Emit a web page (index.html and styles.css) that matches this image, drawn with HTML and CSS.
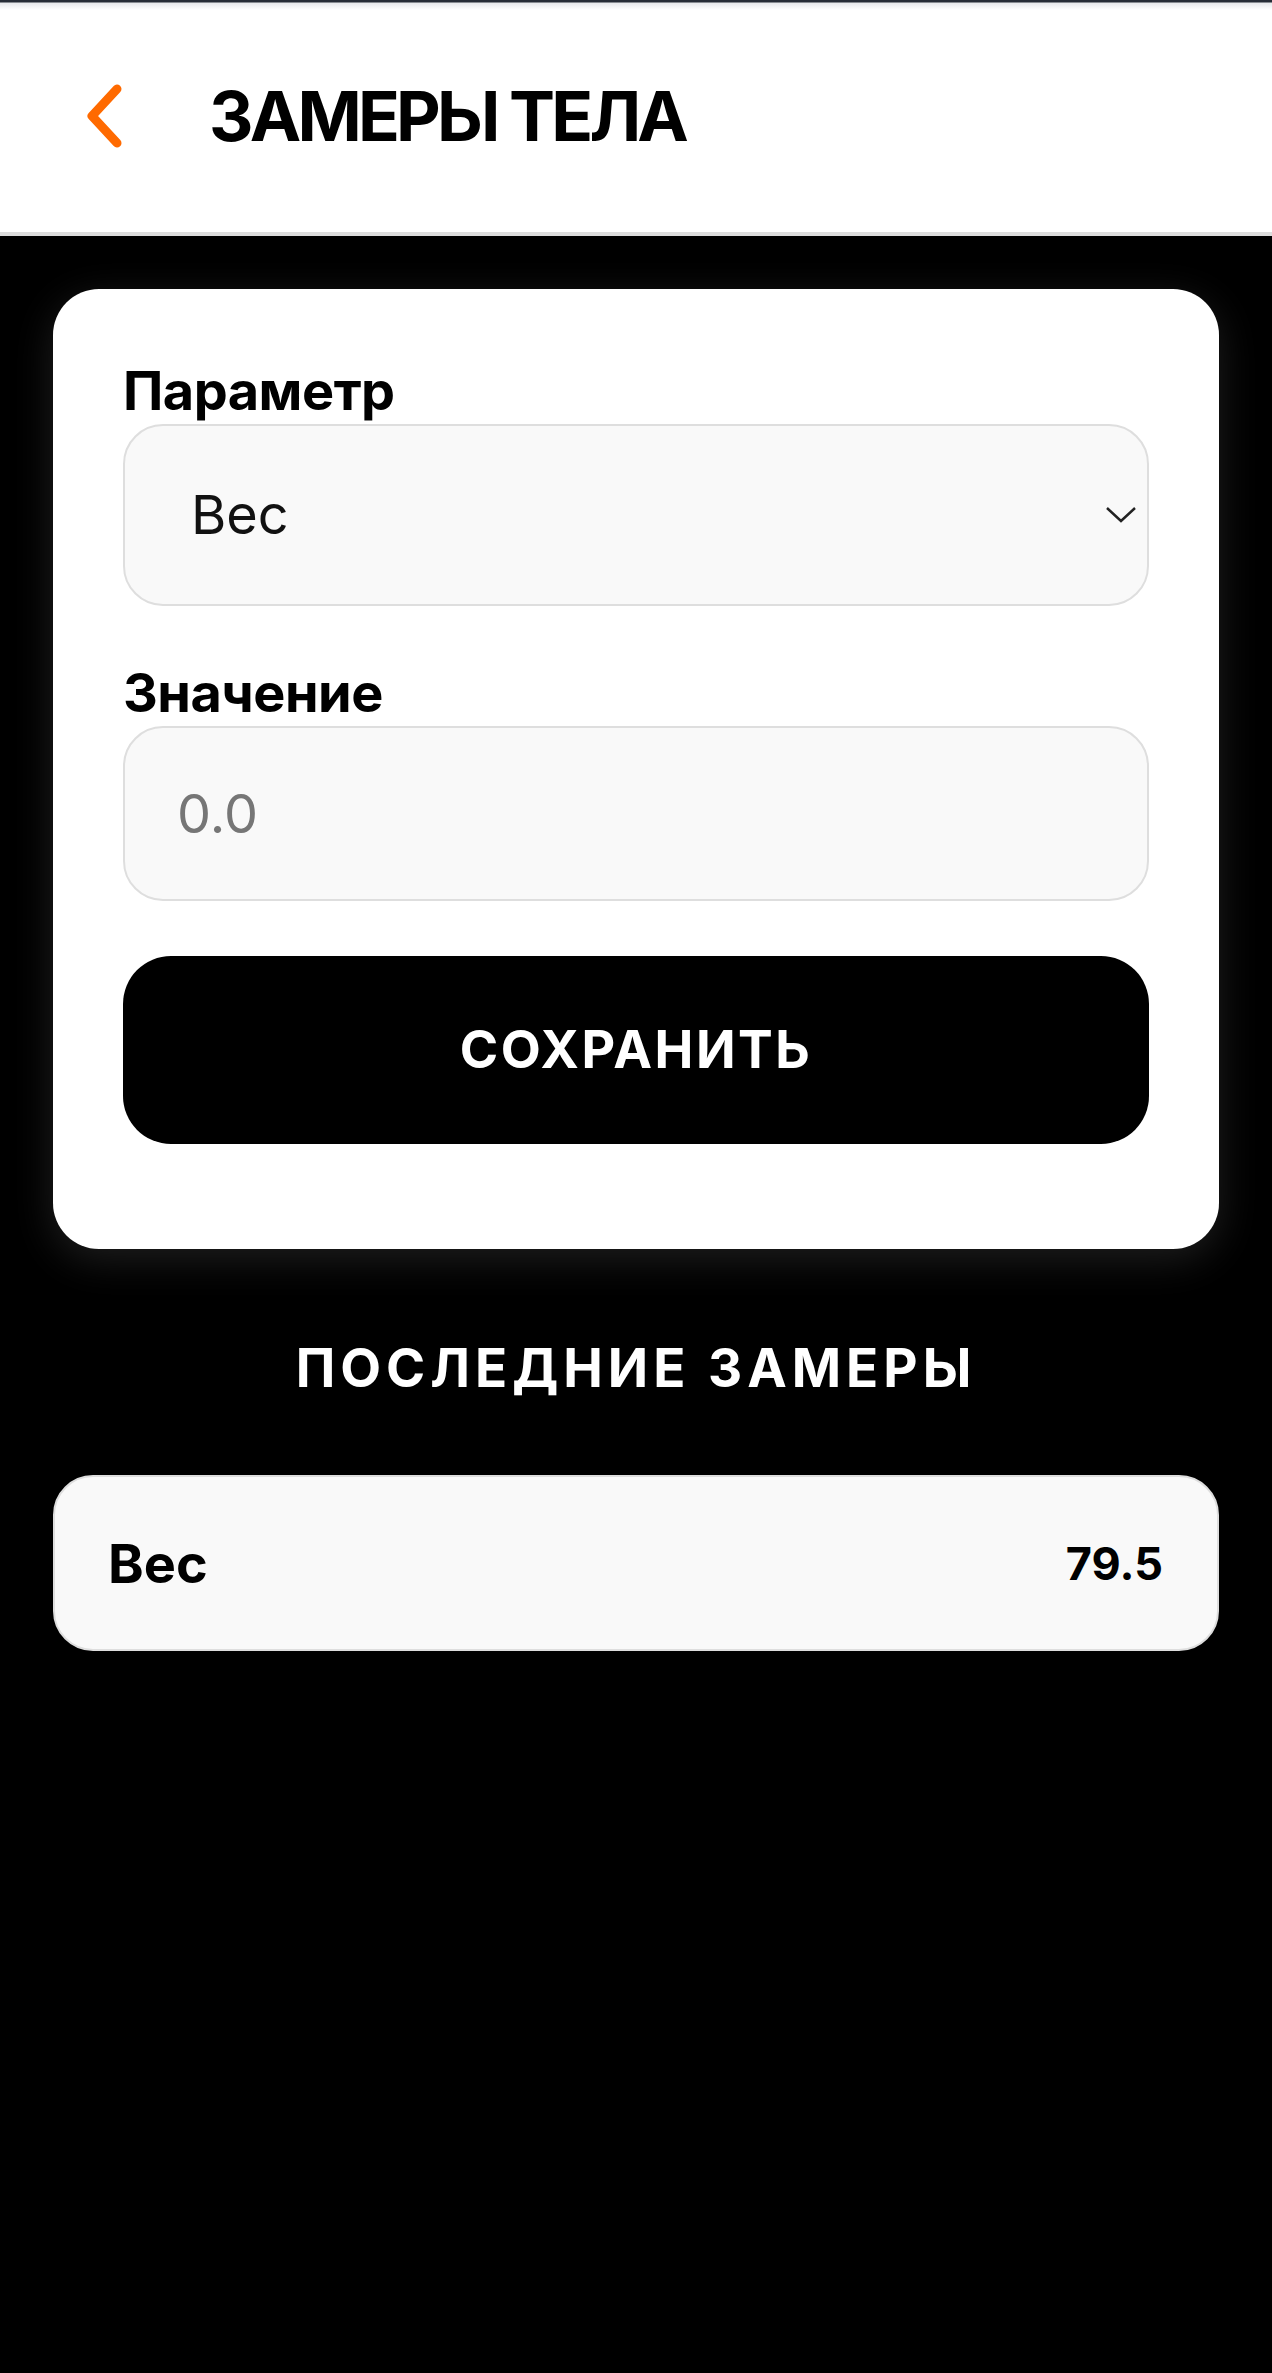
FILE: index.html
```html
<!DOCTYPE html>
<html lang="ru">
  <head>
    <meta charset="utf-8" />
    <title>Замеры тела</title>
    <link rel="stylesheet" href="styles.css">
  </head>
  <body>
    <header class="top-bar">
      <a href="#" class="back-link" aria-label="Назад">
        <svg class="back-icon" viewBox="0 0 44 70" width="44" height="70">
          <path d="M35 8 L10 35 L35 62" fill="none" stroke="#ff6a00" stroke-width="9" stroke-linecap="round" stroke-linejoin="round" />
        </svg>
      </a>
      <h1 class="page-title">ЗАМЕРЫ ТЕЛА</h1>
    </header>

    <main class="content">
      <form class="measure-card">
        <div class="field">
          <label class="field-label" for="param">Параметр</label>
          <div class="select-wrap">
            <select id="param" class="field-select">
              <option>Вес</option>
              <option>Талия</option>
              <option>Грудь</option>
              <option>Бёдра</option>
            </select>
            <svg class="select-arrow" viewBox="0 0 32 18" width="32" height="18">
              <path d="M2 2 L16 15 L30 2" fill="none" stroke="#222" stroke-width="2.5" />
            </svg>
          </div>
        </div>
        <div class="field">
          <label class="field-label" for="value">Значение</label>
          <input id="value" class="field-input" type="text" placeholder="0.0" />
        </div>
        <button type="button" class="save-btn">СОХРАНИТЬ</button>
      </form>

      <h2 class="section-title">ПОСЛЕДНИЕ ЗАМЕРЫ</h2>

      <ul class="history">
        <li class="history-item">
          <span class="history-name">Вес</span>
          <span class="history-value">79.5</span>
        </li>
      </ul>
    </main>
  </body>
</html>
```

FILE: styles.css
```css
body,
h1,
h2,
ul,
button {
  margin: 0;
  padding: 0;
  font-family: Inter, "Liberation Sans", Arial, sans-serif;
  box-sizing: border-box;
}

body {
  background-color: #000;
  min-height: 2373px;
}

.top-bar {
  display: flex;
  align-items: center;
  height: 236px;
  padding-left: 82px;
  box-sizing: border-box;
  background: linear-gradient(#262c36 0, #262c36 2px, #e6e8eb 3px, #fff 10px);
  border-bottom: 4px solid #dcdcdc;
}
.back-link {
  display: flex;
  margin-right: 83px;
}
.back-icon {
  display: block;
}
.page-title {
  font-size: 69px;
  font-weight: 700;
  letter-spacing: -3.8px;
  color: #000;
  line-height: 1.2;
}

.content {
  padding: 53px 53px 0;
}

.measure-card {
  background-color: #fff;
  border-radius: 46px;
  padding: 70px 70px 105px;
  box-shadow: 0 10px 40px rgba(255, 255, 255, 0.12);
}
.field {
  margin-bottom: 55px;
}
.field-label {
  display: block;
  font-size: 54px;
  font-weight: 700;
  line-height: 1.2;
  letter-spacing: -0.5px;
  color: #000;
}
.select-wrap {
  position: relative;
}
.field-select,
.field-input {
  display: block;
  width: 100%;
  box-sizing: border-box;
  background-color: #f9f9f9;
  border: 2px solid #dedede;
  border-radius: 40px;
  font-family: Inter, "Liberation Sans", Arial, sans-serif;
  font-size: 54px;
  font-weight: 400;
  color: #111;
  outline: none;
}
.field-select {
  height: 182px;
  padding-left: 66px;
  appearance: none;
  -webkit-appearance: none;
}
.select-arrow {
  position: absolute;
  right: 12px;
  top: 82px;
}
.field-input {
  height: 175px;
  padding-left: 52px;
}
.field-input::placeholder {
  color: #767676;
}

.save-btn {
  display: block;
  width: 100%;
  height: 188px;
  background-color: #000;
  color: #fff;
  border: none;
  border-radius: 48px;
  font-size: 52px;
  font-weight: 700;
  letter-spacing: 2.5px;
}

.section-title {
  margin-top: 88px;
  text-align: center;
  color: #fff;
  font-size: 53px;
  font-weight: 700;
  letter-spacing: 5px;
  line-height: 1.2;
}

.history {
  list-style: none;
  margin-top: 75px;
}
.history-item {
  display: flex;
  justify-content: space-between;
  align-items: center;
  height: 176px;
  box-sizing: border-box;
  padding: 0 54px 0 53px;
  background-color: #f9f9f9;
  border: 2px solid #dedede;
  border-radius: 40px;
}
.history-name {
  font-size: 54px;
  font-weight: 700;
  color: #000;
}
.history-value {
  font-size: 45px;
  font-weight: 700;
  color: #000;
}
```
